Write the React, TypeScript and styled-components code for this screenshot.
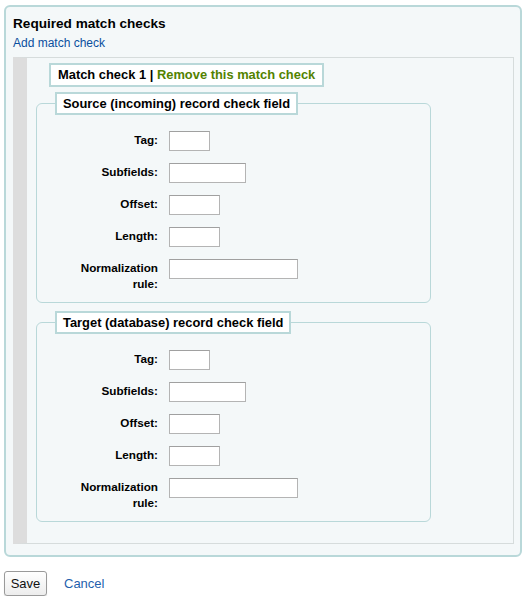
import { FunctionComponent } from 'react'
import styled, { createGlobalStyle } from 'styled-components'

const GlobalStyle = createGlobalStyle`
  body {
    margin: 0;
    background: #ffffff;
    font-family: 'Liberation Sans', Arial, Helvetica, sans-serif;
    color: #000000;
  }
`

const Color = {
  teal: '#b9d8d9',
  panel: '#f4f8f9',
  link: '#0a4f9e',
  green: '#538200',
}

type Field = { label: string; width: number }

const fields: Field[] = [
  { label: 'Tag:', width: 41 },
  { label: 'Subfields:', width: 77 },
  { label: 'Offset:', width: 51 },
  { label: 'Length:', width: 51 },
  { label: 'Normalization rule:', width: 129 },
]

const CheckFieldset: FunctionComponent<{ title: string }> = ({ title }) => (
  <StyledFieldset>
    <Legend>{title}</Legend>
    {fields.map(field => (
      <Row key={field.label}>
        <Label>{field.label}</Label>
        <TextInput type='text' $width={field.width} />
      </Row>
    ))}
  </StyledFieldset>
)

const App: FunctionComponent = () => (
  <Page>
    <GlobalStyle />
    <OuterBox>
      <Title>Required match checks</Title>
      <BlueLink href='#'>Add match check</BlueLink>
      <MatchCheckBox>
        <MatchLegend>
          Match check 1 | <GreenLink href='#'>Remove this match check</GreenLink>
        </MatchLegend>
        <CheckFieldset title='Source (incoming) record check field' />
        <CheckFieldset title='Target (database) record check field' />
      </MatchCheckBox>
    </OuterBox>
    <Actions>
      <SaveButton type='button'>Save</SaveButton>
      <CancelLink href='#'>Cancel</CancelLink>
    </Actions>
  </Page>
)

export default App

const Page = styled.div`
  padding: 5px 0 0 4px;
  width: 518px;
`

const OuterBox = styled.div`
  box-sizing: border-box;
  width: 518px;
  border: 2px solid ${Color.teal};
  border-radius: 6px;
  background-color: ${Color.panel};
  padding: 8px 6px 11px 7px;
`

const Title = styled.h3`
  margin: 0;
  font-size: 13.6px;
  line-height: 18px;
  font-weight: bold;
`

const BlueLink = styled.a`
  display: block;
  margin-top: 2px;
  font-size: 12px;
  line-height: 16px;
  color: ${Color.link};
  text-decoration: none;
`

const MatchCheckBox = styled.div`
  margin-top: 6px;
  border: 1px solid #d6dcdc;
  border-left: 14px solid #dddddd;
  padding: 5px 0 21px 9px;
  display: flex;
  flex-direction: column;
  align-items: flex-start;
`

const MatchLegend = styled.div`
  margin-left: 13px;
  margin-bottom: 5px;
  background: #ffffff;
  border: 2px solid ${Color.teal};
  padding: 0 7px;
  font-size: 12.9px;
  line-height: 20px;
  font-weight: bold;
  white-space: nowrap;
`

const GreenLink = styled.a`
  color: ${Color.green};
  text-decoration: none;
`

const StyledFieldset = styled.fieldset`
  box-sizing: border-box;
  width: 395px;
  margin: 0 0 8px 0;
  border: 1px solid ${Color.teal};
  border-radius: 6px;
  padding: 16px 0 10px 30px;

  &:last-child {
    margin-bottom: 0;
  }
`

const Legend = styled.legend`
  margin-left: -12px;
  background: #ffffff;
  border: 2px solid ${Color.teal};
  padding: 0 6px;
  font-size: 12.9px;
  line-height: 19px;
  font-weight: bold;
  white-space: nowrap;
`

const Row = styled.div`
  display: flex;
  align-items: flex-start;
  margin-bottom: 12px;

  &:last-child {
    margin-bottom: 0;
  }
`

const Label = styled.label`
  width: 91px;
  margin-right: 11px;
  padding-top: 1px;
  text-align: right;
  font-size: 11.7px;
  line-height: 16px;
  font-weight: bold;
`

const TextInput = styled.input<{ $width: number }>`
  box-sizing: border-box;
  width: ${props => props.$width}px;
  height: 20px;
  margin: 0;
  padding: 1px 3px;
  border: 1px solid #b4b4b4;
  border-top-color: #a0a0a0;
  background: #ffffff;
  font-size: 12px;
`

const Actions = styled.div`
  display: flex;
  align-items: center;
  gap: 17px;
  margin-top: 14px;
`

const SaveButton = styled.button`
  box-sizing: border-box;
  width: 43px;
  height: 25px;
  padding: 0;
  border: 1px solid #9a9a9a;
  border-radius: 3px;
  background: linear-gradient(#ffffff, #ededed);
  box-shadow: 0 1px 1px rgba(0, 0, 0, 0.15);
  font-family: 'Liberation Sans', Arial, sans-serif;
  font-size: 13px;
  color: #111111;
`

const CancelLink = styled.a`
  font-size: 13px;
  color: #1f5fad;
  text-decoration: none;
`
